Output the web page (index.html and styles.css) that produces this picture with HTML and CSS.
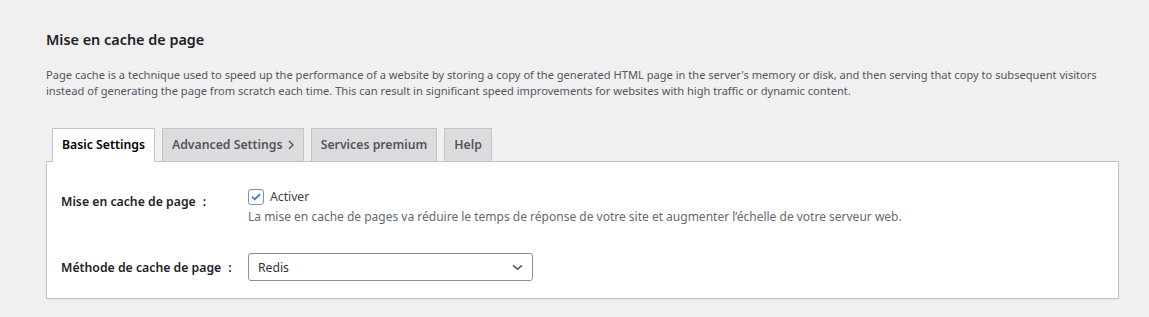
FILE: index.html
```html
<!DOCTYPE html>
<html lang="fr">
<head>
<meta charset="utf-8">
<title>Mise en cache de page</title>
<link rel="stylesheet" href="styles.css">
</head>
<body>
<div class="wrap">
  <h2 class="title">Mise en cache de page</h2>
  <p class="intro">Page cache is a technique used to speed up the performance of a website by storing a copy of the generated HTML page in the server's memory or disk, and then serving that copy to subsequent visitors instead of generating the page from scratch each time. This can result in significant speed improvements for websites with high traffic or dynamic content.</p>
  <nav class="tabs">
    <a class="tab active">Basic Settings</a>
    <a class="tab">Advanced Settings <svg class="chev" viewBox="0 0 6 10" width="6" height="10"><path d="M1 1l4 4-4 4" fill="none" stroke="#50575e" stroke-width="1.4"/></svg></a>
    <a class="tab">Services premium</a>
    <a class="tab">Help</a>
  </nav>
  <div class="panel">
    <div class="row row-first">
      <div class="label">Mise en cache de page<span class="colon">:</span></div>
      <div class="field">
        <label class="check">
          <span class="box"><svg viewBox="0 0 16 16" width="16" height="16"><path d="M4 8.2l2.6 2.6L12 5.2" fill="none" stroke="#3582c4" stroke-width="2" stroke-linecap="round" stroke-linejoin="round"/></svg></span>
          <span>Activer</span>
        </label>
        <p class="desc">La mise en cache de pages va réduire le temps de réponse de votre site et augmenter l’échelle de votre serveur web.</p>
      </div>
    </div>
    <div class="row row-second">
      <div class="label">Méthode de cache de page<span class="colon">:</span></div>
      <div class="field">
        <div class="select">
          <span>Redis</span>
          <svg class="arrow" viewBox="0 0 12 8" width="11" height="7"><path d="M1 1.5l5 4.5 5-4.5" fill="none" stroke="#50575e" stroke-width="1.8"/></svg>
        </div>
      </div>
    </div>
  </div>
</div>
</body>
</html>
```
FILE: styles.css
```css
html, body {
  margin: 0;
  padding: 0;
  background: #f0f0f1;
}
body {
  font-family: "Noto Sans", "Open Sans", sans-serif;
  color: #1d2327;
}
.wrap {
  padding: 30px 30px 20px 46px;
}
.title {
  margin: 0;
  font-size: 14.4px;
  font-weight: 600;
  line-height: 20px;
  color: #1d2327;
}
.intro {
  margin: 17px 0 0;
  font-size: 11.1px;
  line-height: 16px;
  color: #50575e;
}
.tabs {
  display: flex;
  margin-top: 29px;
  padding-left: 6px;
  gap: 7px;
}
.tab {
  display: block;
  padding: 7px 9px 7px;
  font-size: 12.25px;
  font-weight: 600;
  line-height: 18px;
  height: 18px;
  color: #50575e;
  background: #dcdcde;
  border: 1px solid #c3c4c7;
  border-bottom: none;
  margin-bottom: -1px;
  position: relative;
  z-index: 1;
}
.tab.active {
  background: #fff;
  color: #000;
  padding-bottom: 8px;
}
.chev {
  display: inline-block;
  vertical-align: -1px;
  margin-left: 2px;
}
.panel {
  background: #fff;
  border: 1px solid #c3c4c7;
  box-shadow: 0 1px 1px rgba(0,0,0,0.04);
  padding: 0 14px;
}
.row {
  display: flex;
}
.row-first {
  padding: 26px 0 0;
}
.row-second {
  padding: 28px 0 17px;
}
.label {
  width: 187px;
  flex: none;
  font-size: 12.25px;
  font-weight: 600;
  color: #1d2327;
  line-height: 18px;
}
.colon {
  margin-left: 7px;
}
.row-first .label {
  padding-top: 5px;
}
.row-second .label {
  padding-top: 6px;
}
.check {
  display: flex;
  align-items: center;
  gap: 6px;
  font-size: 12.2px;
  line-height: 18px;
  color: #3c434a;
}
.box {
  width: 14px;
  height: 14px;
  border: 1px solid #8c8f94;
  border-radius: 3px;
  display: flex;
  align-items: center;
  justify-content: center;
  background: #fff;
}
.box svg {
  width: 14px;
  height: 14px;
}
.desc {
  margin: 2px 0 0;
  font-size: 12px;
  line-height: 17px;
  color: #646970;
}
.select {
  height: 26px;
  border: 1px solid #8c8f94;
  border-radius: 3px;
  display: flex;
  align-items: center;
  justify-content: space-between;
  padding: 0 9px;
  box-sizing: content-box;
  font-size: 12.2px;
  color: #2c3338;
  width: 265px;
}
.arrow {
  display: block;
}
```
